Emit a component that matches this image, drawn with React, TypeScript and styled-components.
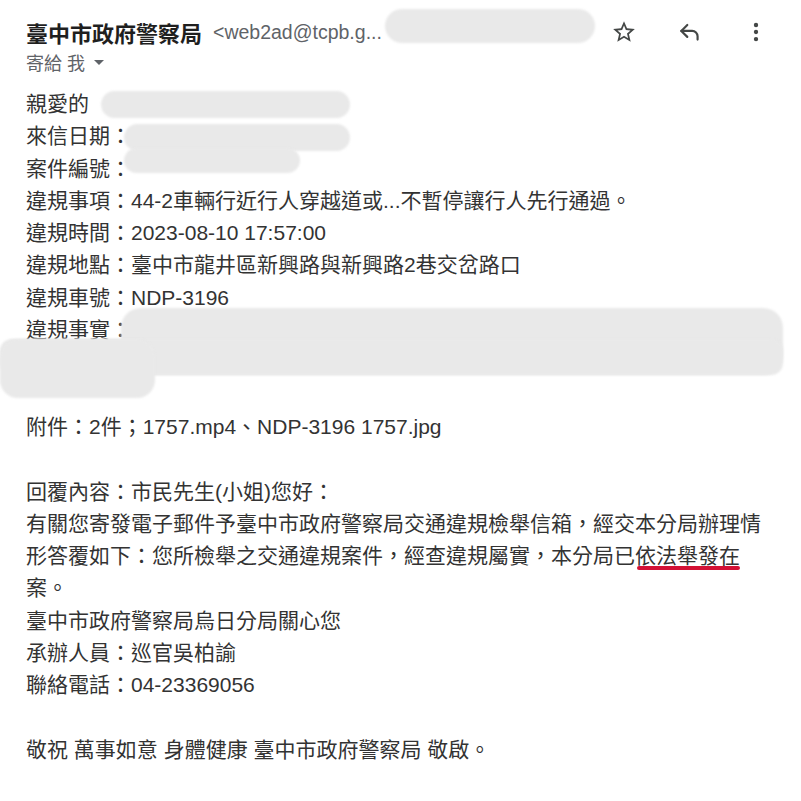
import React from "react";
import styled, { createGlobalStyle } from "styled-components";

const GlobalStyle = createGlobalStyle`
  html, body { margin: 0; padding: 0; background: #ffffff; }
  body { font-family: "Liberation Sans", "Noto Sans CJK TC", sans-serif; }
`;

const Page = styled.div`
  position: relative;
  width: 801px;
  height: 801px;
  overflow: hidden;
  background: #fff;
  box-sizing: border-box;
  padding: 10px 0 0 26px;
  color: #222;
`;

const HeaderRow = styled.div`
  display: flex;
  align-items: center;
  height: 44px;
  padding-right: 32px;
`;

const Sender = styled.span`
  font-size: 22px;
  font-weight: 700;
  color: #1f1f1f;
  white-space: nowrap;
`;

const Address = styled.span`
  font-size: 19.5px;
  color: #5f6368;
  margin-left: 11px;
  white-space: nowrap;
`;

const Icons = styled.div`
  margin-left: auto;
  display: flex;
  align-items: center;
  gap: 40px;
  color: #444746;
`;

const IconBox = styled.span`
  display: inline-flex;
  width: 26px;
  height: 26px;
  align-items: center;
  justify-content: center;
`;

const SubRow = styled.div`
  display: flex;
  align-items: center;
  height: 16px;
  font-size: 18px;
  color: #5f6368;
  white-space: nowrap;
`;

const Caret = styled.span`
  display: inline-block;
  width: 0;
  height: 0;
  margin-left: 9px;
  border-left: 5px solid transparent;
  border-right: 5px solid transparent;
  border-top: 5px solid #5f6368;
`;

const Body = styled.div`
  margin-top: 18px;
  font-size: 21px;
  line-height: 32.3px;
  color: #333;
`;

const Line = styled.div`
  height: 32.3px;
  white-space: nowrap;
`;

const Paragraph = styled.div<{ $lines: number }>`
  height: ${(p) => p.$lines * 32.3}px;
  white-space: nowrap;
`;

const Marked = styled.span`
  position: relative;
  &::after {
    content: "";
    position: absolute;
    left: 2px;
    right: 0;
    bottom: -3px;
    height: 4px;
    border-radius: 2px;
    background: #d31135;
  }
`;

const Blob = styled.div<{ $r?: number }>`
  position: absolute;
  background: #e9e9e9;
  border-radius: ${(p) => p.$r ?? 14}px;
  filter: blur(1px);
`;

const StarIcon = () => (
  <svg width="26" height="26" viewBox="0 0 24 24" fill="currentColor">
    <path d="M22 9.24l-7.19-.62L12 2 9.19 8.63 2 9.24l5.46 4.73L5.82 21 12 17.27 18.18 21l-1.63-7.03L22 9.24zM12 15.4l-3.76 2.27 1-4.28-3.32-2.88 4.38-.38L12 6.1l1.71 4.04 4.38.38-3.32 2.88 1 4.28L12 15.4z" />
  </svg>
);

const ReplyIcon = () => (
  <svg width="26" height="26" viewBox="0 0 24 24" fill="none" stroke="currentColor" strokeWidth="2" strokeLinecap="round" strokeLinejoin="round">
    <path d="M9.5 5.5L4 11l5.5 5.5" />
    <path d="M4 11h10a5 5 0 0 1 5 5v3" />
  </svg>
);

const MoreIcon = () => (
  <svg width="26" height="26" viewBox="0 0 24 24" fill="currentColor">
    <circle cx="12" cy="5.5" r="2" />
    <circle cx="12" cy="12" r="2" />
    <circle cx="12" cy="18.5" r="2" />
  </svg>
);

export default function App() {
  return (
    <>
      <GlobalStyle />
      <Page lang="zh-Hant-TW">
        <HeaderRow>
          <Sender>臺中市政府警察局</Sender>
          <Address>&lt;web2ad@tcpb.g...</Address>
          <Icons>
            <IconBox><StarIcon /></IconBox>
            <IconBox><ReplyIcon /></IconBox>
            <IconBox><MoreIcon /></IconBox>
          </Icons>
        </HeaderRow>
        <SubRow>
          寄給 我<Caret />
        </SubRow>
        <Body>
          <Line>親愛的</Line>
          <Line>來信日期：</Line>
          <Line>案件編號：</Line>
          <Line>違規事項：44-2車輛行近行人穿越道或...不暫停讓行人先行通過。</Line>
          <Line>違規時間：2023-08-10 17:57:00</Line>
          <Line>違規地點：臺中市龍井區新興路與新興路2巷交岔路口</Line>
          <Line>違規車號：NDP-3196</Line>
          <Line>違規事實：</Line>
          <Line />
          <Line />
          <Line>附件：2件；1757.mp4、NDP-3196 1757.jpg</Line>
          <Line />
          <Line>回覆內容：市民先生(小姐)您好：</Line>
          <Paragraph $lines={3}>
            有關您寄發電子郵件予臺中市政府警察局交通違規檢舉信箱，經交本分局辦理情
            <br />
            形答覆如下：您所檢舉之交通違規案件，經查違規屬實，本分局已<Marked>依法舉發在</Marked>
            <br />
            案。
          </Paragraph>
          <Line>臺中市政府警察局烏日分局關心您</Line>
          <Line>承辦人員：巡官吳柏諭</Line>
          <Line>聯絡電話：04-23369056</Line>
          <Line />
          <Line>敬祝 萬事如意 身體健康 臺中市政府警察局 敬啟。</Line>
        </Body>

        <Blob style={{ left: 385, top: 9, width: 210, height: 34 }} $r={17} />
        <Blob style={{ left: 101, top: 91, width: 249, height: 27 }} />
        <Blob style={{ left: 124, top: 124, width: 226, height: 27 }} />
        <Blob style={{ left: 124, top: 148, width: 176, height: 25 }} />
        <Blob style={{ left: 121, top: 308, width: 662, height: 67 }} $r={20} />
        <Blob style={{ left: 0, top: 339, width: 783, height: 36 }} $r={12} />
        <Blob style={{ left: 0, top: 339, width: 155, height: 59 }} $r={18} />
      </Page>
    </>
  );
}
